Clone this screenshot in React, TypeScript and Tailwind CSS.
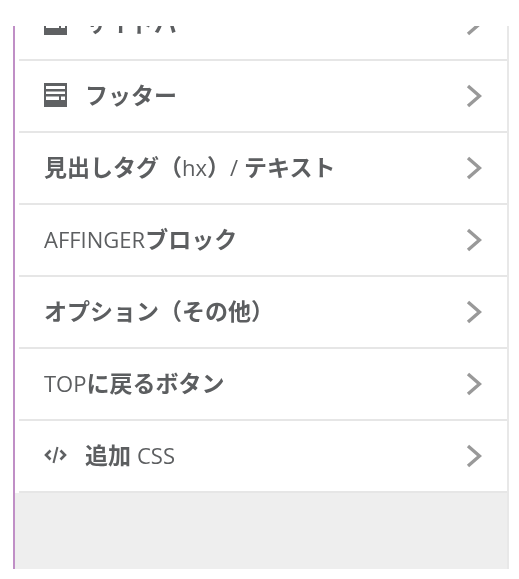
const font = "[font-family:'Open_Sans','Noto_Sans_CJK_JP',sans-serif]";

function FooterIcon() {
  return (
    <svg width="23" height="24" viewBox="0 0 23 24" className="shrink-0">
      <path
        fillRule="evenodd"
        fill="#5f6163"
        d="M0 0H23V24H0ZM2 3V6H21V3ZM2 8.500V11H21V8.500ZM2 13.500V17H15V13.500ZM17 13.500V17H21V13.500Z"
      />
    </svg>
  );
}

function CodeIcon() {
  return (
    <svg width="23" height="18" viewBox="0 0 23 18" fill="none" stroke="#5f6163" strokeWidth="2.6" className="shrink-0">
      <path d="M6.500 4.500 2 9 6.500 13.500M16.500 4.500 21 9 16.500 13.500" />
      <path d="M13.500 1 9.500 17" strokeWidth="2" />
    </svg>
  );
}

function Chevron() {
  return (
    <svg width="16" height="24" viewBox="0 0 16 24" fill="none" stroke="#999999" strokeWidth="3.4" className="shrink-0">
      <path d="M2 2 13.500 12 2 22" />
    </svg>
  );
}

function Latin({ children }: { children: React.ReactNode }) {
  return <span className="text-[22px] font-medium">{children}</span>;
}

function Row({ icon, children }: { icon?: React.ReactNode; children: React.ReactNode }) {
  return (
    <div className="bg-white pl-1">
      <div className="flex h-[72px] items-center justify-between border-b-2 border-[#e6e6e6] pl-[25px] pr-[25px]">
        <div className="flex items-center gap-[18px] pb-[2px] text-[23px] whitespace-nowrap font-bold text-[#5c5e60]">
          {icon}
          <span>{children}</span>
        </div>
        <Chevron />
      </div>
    </div>
  );
}

export default function App() {
  return (
    <div className={`h-[579px] w-[519px] overflow-hidden bg-white pt-[26px] ${font}`}>
      <div className="ml-[13px] h-[543px] w-[496px] overflow-hidden border-l-2 border-r-2 border-l-[#c08fc6] border-r-[#e8e8e8] bg-[#eeeeee] blur-[0.4px]">
        <div className="mt-[-37px]">
          <Row icon={<FooterIcon />}>サイドバー</Row>
          <Row icon={<FooterIcon />}>フッター</Row>
          <Row>
            見出しタグ（<Latin>hx</Latin>）<Latin>/</Latin> テキスト
          </Row>
          <Row>
            <Latin>AFFINGER</Latin>ブロック
          </Row>
          <Row>オプション（その他）</Row>
          <Row>
            <Latin>TOP</Latin>に戻るボタン
          </Row>
          <Row icon={<CodeIcon />}>
            追加 <Latin>CSS</Latin>
          </Row>
        </div>
      </div>
    </div>
  );
}
